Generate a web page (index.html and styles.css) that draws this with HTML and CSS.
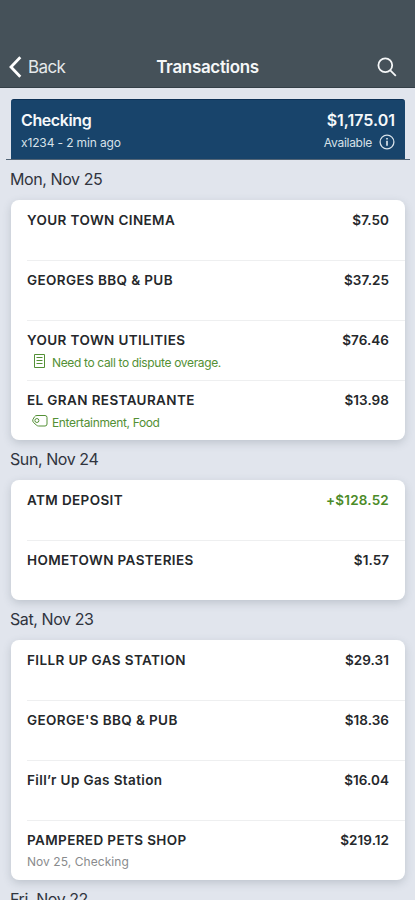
FILE: index.html
```html
<!DOCTYPE html>
<html lang="en">
<head>
<meta charset="utf-8">
<title>Transactions</title>
<link rel="stylesheet" href="styles.css">
</head>
<body>
<header class="nav">
  <a class="back"><svg width="13" height="22" viewBox="0 0 13 22"><path d="M11.3 1.3 2 11l9.300 9.700"/></svg><span>Back</span></a>
  <h1>Transactions</h1>
  <svg class="search" width="20" height="20" viewBox="0 0 20 20"><circle cx="8.300" cy="8.300" r="6.900"/><path d="m13.300 13.300 5.500 5.500"/></svg>
</header>
<main>
  <section class="account">
    <div class="summary">
      <div class="line"><strong class="name">Checking</strong><strong class="balance">$1,175.01</strong></div>
      <div class="line small"><span>x1234 - 2 min ago</span><span class="available">Available <svg width="16" height="16" viewBox="0 0 16 16"><circle cx="8" cy="8" r="6.900"/><path class="stem" d="M8 6.800v5M8 3.900v1.700"/></svg></span></div>
    </div>
  </section>

  <h2>Mon, Nov 25</h2>
  <ul class="card">
    <li><div class="entry"><span>YOUR TOWN CINEMA</span><span class="amount">$7.50</span></div></li>
    <li><div class="entry"><span>GEORGES BBQ &amp; PUB</span><span class="amount">$37.25</span></div></li>
    <li><div class="entry"><span>YOUR TOWN UTILITIES</span><span class="amount">$76.46</span></div>
      <div class="detail note"><svg width="16" height="16" viewBox="0 0 16 16"><path d="M2.500 1.500h10v13h-10zM4.500 4.500h6M4.500 7.500h6M4.500 10.500h6"/></svg><span>Need to call to dispute overage.</span></div></li>
    <li><div class="entry"><span>EL GRAN RESTAURANTE</span><span class="amount">$13.98</span></div>
      <div class="detail tags"><svg width="16" height="16" viewBox="0 0 16 16"><path d="M5 2.500h8a2 2 0 0 1 2 2v6.500a2 2 0 0 1-2 2H6.500Q5.500 13 4.700 12.300L1.500 9.500Q.300 8.200.900 6.500L2.500 3.800Q3.400 2.500 5 2.500z"/><circle cx="4.900" cy="7.500" r="2"/></svg><span>Entertainment, Food</span></div></li>
  </ul>

  <h2>Sun, Nov 24</h2>
  <ul class="card">
    <li><div class="entry"><span>ATM DEPOSIT</span><span class="amount credit">+$128.52</span></div></li>
    <li><div class="entry"><span>HOMETOWN PASTERIES</span><span class="amount">$1.57</span></div></li>
  </ul>

  <h2>Sat, Nov 23</h2>
  <ul class="card">
    <li><div class="entry"><span>FILLR UP GAS STATION</span><span class="amount">$29.31</span></div></li>
    <li><div class="entry"><span>GEORGE'S BBQ &amp; PUB</span><span class="amount">$18.36</span></div></li>
    <li><div class="entry"><span>Fill’r Up Gas Station</span><span class="amount">$16.04</span></div></li>
    <li><div class="entry"><span>PAMPERED PETS SHOP</span><span class="amount">$219.12</span></div>
      <div class="detail posted">Nov 25, Checking</div></li>
  </ul>

  <h2>Fri, Nov 22</h2>
</main>
</body>
</html>
```
FILE: styles.css
```css
* { box-sizing: border-box; }
body {
  margin: 0;
  height: 900px;
  overflow: hidden;
  background: #e1e5ed;
  color: #25282b;
  font-family: Inter, "Liberation Sans", sans-serif;
}
svg { fill: none; stroke: currentColor; flex: none; }
.nav {
  height: 88px;
  padding: 47px 9px 0;
  display: grid;
  grid-template-columns: 1fr auto 1fr;
  align-items: center;
  background: #455159;
  border-bottom: 1px solid #343f47;
  color: #f5f7f8;
}
.back { display: flex; align-items: center; gap: 6px; font-size: 17px; letter-spacing: -0.600px; color: #e5e9eb; }
.back svg { stroke: #fff; stroke-width: 2.800; }
.nav h1 { margin: 0; font-size: 17px; font-weight: 600; letter-spacing: -0.330px; }
.search { justify-self: end; margin-right: 9px; stroke-width: 1.800; }
.account { margin: 11px 5px 0 6px; padding: 0 5px; border-bottom: 1px solid #536576; }
.summary {
  height: 60px;
  padding: 9px 10px 0;
  background: #18446b;
  border-top: 1px solid #0d3156;
  border-radius: 3px 3px 0 0;
  color: #f5f8fa;
}
.line { display: flex; justify-content: space-between; align-items: center; height: 22px; font-size: 16px; }
.line strong { font-weight: 600; }
.line .name { letter-spacing: -0.400px; }
.small { font-size: 12px; letter-spacing: -0.130px; color: #d7e1e9; }
.available { display: flex; align-items: center; gap: 7px; letter-spacing: -0.280px; }
.available svg { stroke-width: 1.300; }
.available .stem { stroke-width: 1.700; }
h2 { margin: 0; height: 40px; padding-left: 10px; line-height: 38px; font-size: 16px; font-weight: 400; letter-spacing: -0.420px; color: #30343e; }
.card {
  list-style: none;
  margin: 0 10px 0 11px;
  padding: 0;
  background: #fff;
  border-radius: 8px;
  box-shadow: 0 3px 8px rgba(70, 80, 95, 0.220);
}
.card li { height: 60px; margin-left: 16px; padding: 11px 16px 0 0; }
.card li + li { border-top: 1px solid #eeeff0; padding-top: 10px; }
.entry { display: flex; justify-content: space-between; height: 18px; line-height: 18px; font-size: 13.500px; font-weight: 600; letter-spacing: 0.380px; }
.amount { letter-spacing: 0.050px; }
.credit { color: #4b8b28; letter-spacing: 0.200px; }
.detail { height: 18px; margin-top: 5px; display: flex; align-items: center; font-size: 12px; line-height: 18px; }
.note, .tags { gap: 4px; padding-left: 5px; color: #539035; letter-spacing: -0.350px; }
.detail svg { margin-top: -4px; }
.posted { color: #898b8d; margin-top: 4px; letter-spacing: 0.060px; }
```
